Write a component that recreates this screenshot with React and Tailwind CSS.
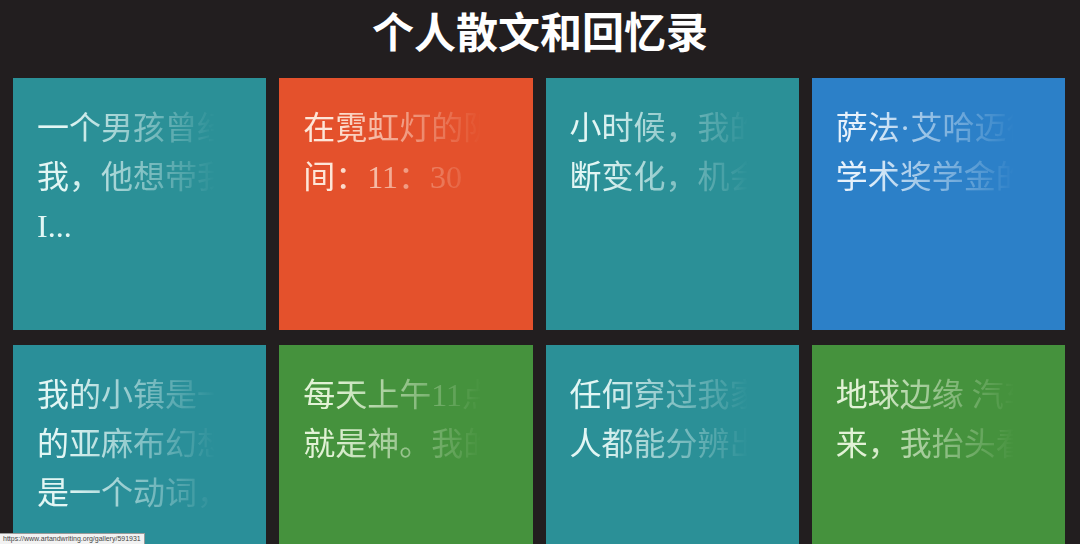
import React from 'react';

const tiles = [
  { bg: 'bg-[#2b9097]', fg: 'text-[#e2f6f4]', lines: ['一个男孩曾经告诉', '我，他想带我去', 'I...'] },
  { bg: 'bg-[#e4512c]', fg: 'text-[#fde6d8]', lines: ['在霓虹灯的阴影下', '间：11：30'] },
  { bg: 'bg-[#2b9097]', fg: 'text-[#e2f6f4]', lines: ['小时候，我的', '断变化，机会'] },
  { bg: 'bg-[#2c80c8]', fg: 'text-[#e6f1fb]', lines: ['萨法·艾哈迈德', '学术奖学金的'] },
  { bg: 'bg-[#2a8f99]', fg: 'text-[#e2f6f4]', lines: ['我的小镇是一个', '的亚麻布幻想', '是一个动词，'] },
  { bg: 'bg-[#45923d]', fg: 'text-[#e2f2d6]', lines: ['每天上午11点', '就是神。我的'] },
  { bg: 'bg-[#2b9097]', fg: 'text-[#e2f6f4]', lines: ['任何穿过我家', '人都能分辨出'] },
  { bg: 'bg-[#45923d]', fg: 'text-[#e2f2d6]', lines: ['地球边缘 汽车', '来，我抬头看'] },
];

function Tile({ tile }) {
  return (
    <div className={`${tile.bg} pt-[26px] pl-[24px]`}>
      <div
        className={`w-[182px] overflow-hidden ${tile.fg} text-[32px] leading-[49px] font-['Liberation_Serif','Noto_Sans_CJK_SC',sans-serif] [mask-image:linear-gradient(to_right,black_0%,black_16%,transparent_98%)] [-webkit-mask-image:linear-gradient(to_right,black_0%,black_16%,transparent_98%)]`}
      >
        {tile.lines.map((line, i) => (
          <div key={i} className="whitespace-nowrap">
            {line}
          </div>
        ))}
      </div>
    </div>
  );
}

export default function App() {
  return (
    <div className="relative h-[544px] w-[1080px] overflow-hidden bg-[#221e1f] font-['Noto_Sans_CJK_SC',sans-serif]">
      <div className="flex h-[60px] items-center justify-center">
        <h1 className="text-[42px] font-bold leading-none text-white">个人散文和回忆录</h1>
      </div>
      <div className="mt-[18px] grid grid-cols-4 auto-rows-[252px] gap-x-[13px] gap-y-[15px] pl-[13px] pr-[15px]">
        {tiles.map((t, i) => (
          <Tile key={i} tile={t} />
        ))}
      </div>
      <div className="absolute bottom-0 left-0 h-[11px] border-t border-r border-[#9a9a9a] bg-[#f2f2f2] px-[3px] font-['Liberation_Sans',sans-serif] text-[7px] leading-[10px] text-[#444]">
        https://www.artandwriting.org/gallery/591931
      </div>
    </div>
  );
}
